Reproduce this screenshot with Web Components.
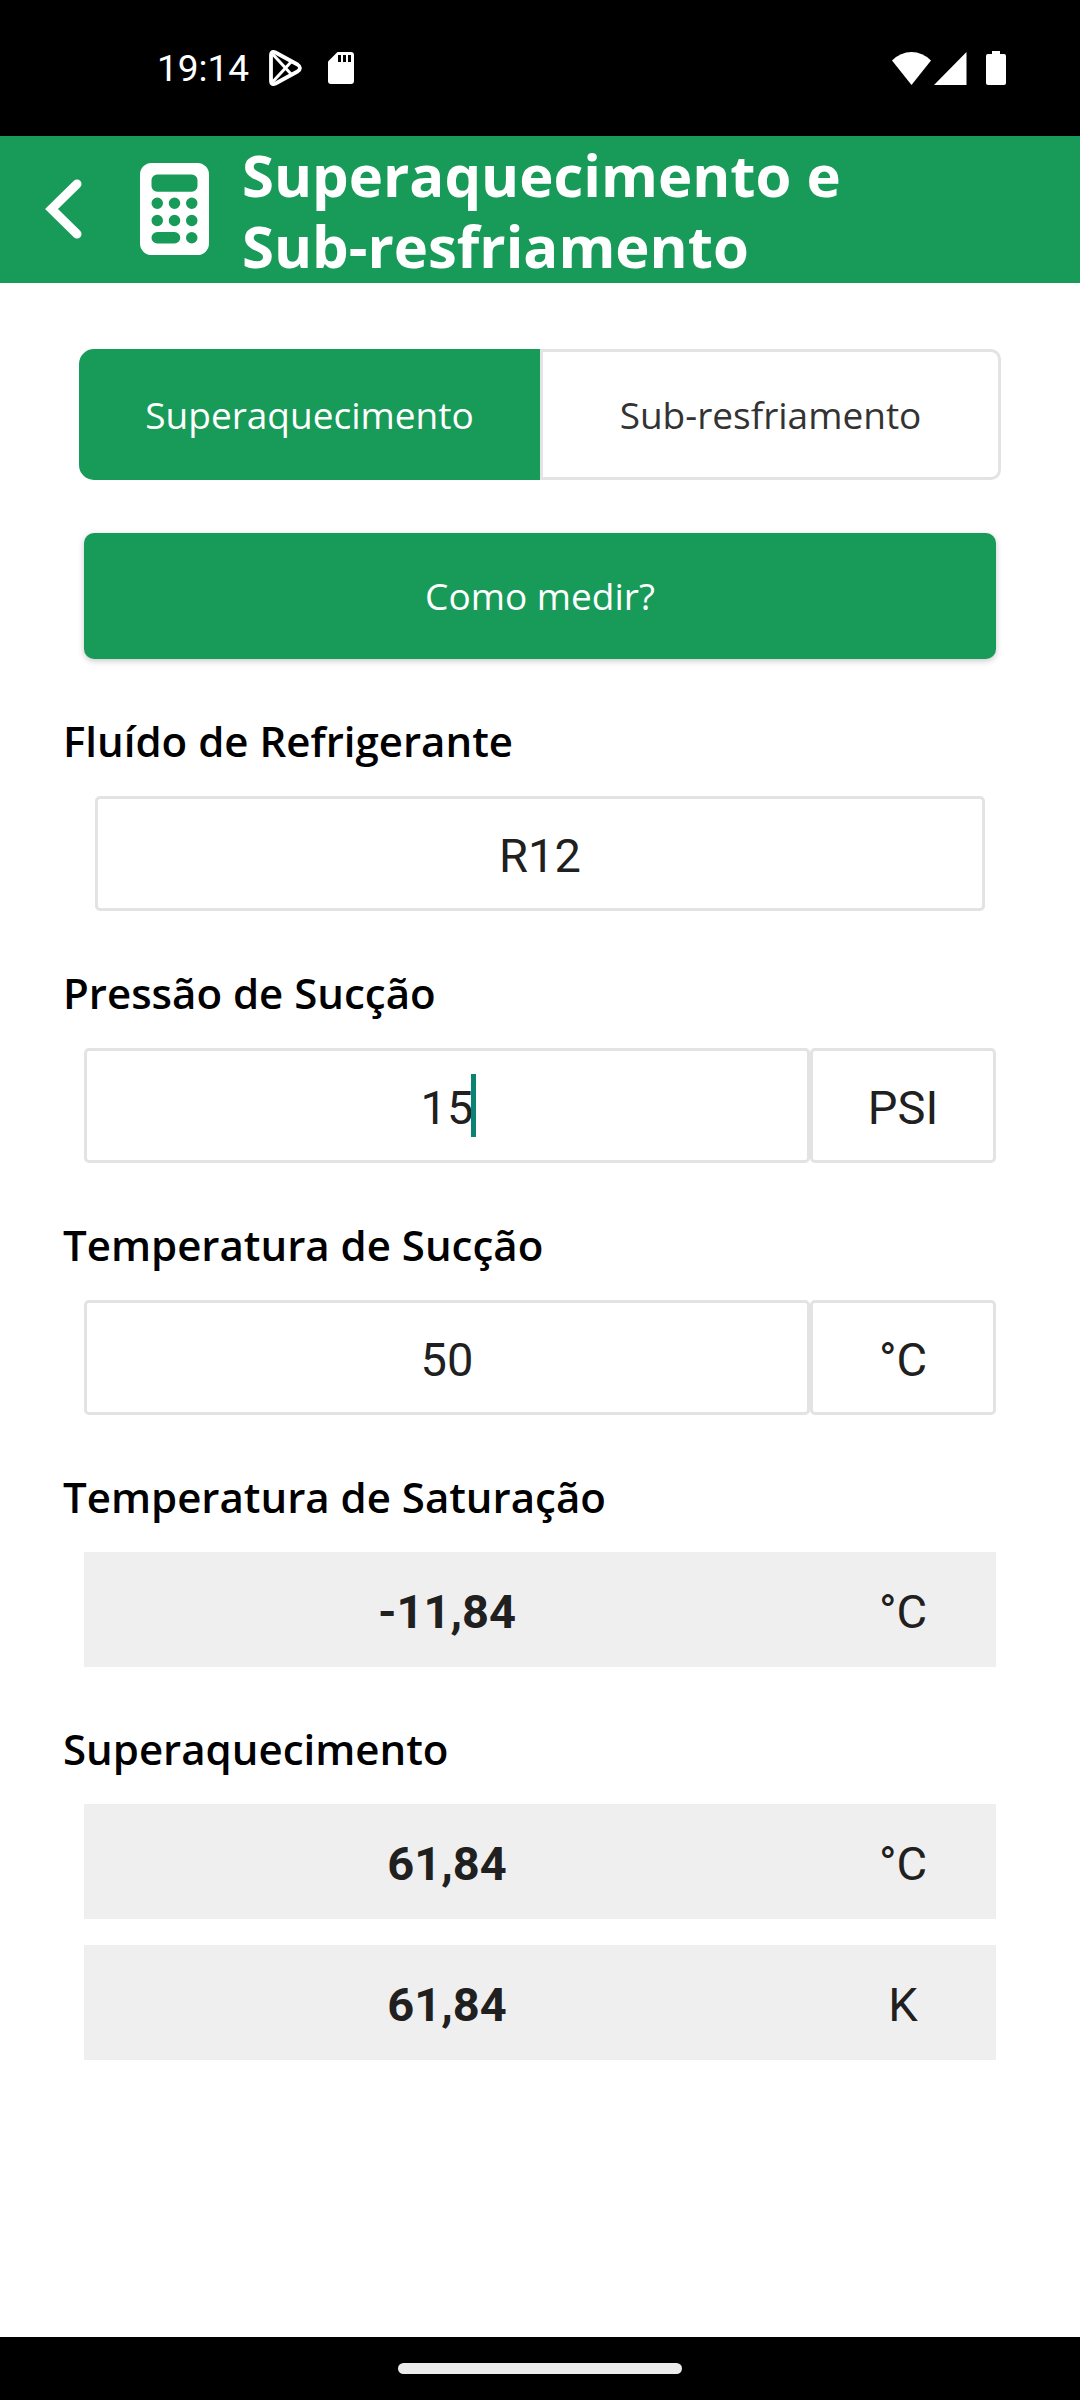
<!DOCTYPE html>
<html lang="pt-BR">
<head>
<meta charset="utf-8">
<meta name="viewport" content="width=device-width, initial-scale=1">
<title>Superaquecimento e Sub-resfriamento</title>
<style>
  :root {
    --green: #189b59;
    --line: #e3e3e3;
    --ink: #202020;
    --ui: "Open Sans", sans-serif;
    --num: Roboto, sans-serif;
  }
  body { margin: 0; background: #fff; font-family: var(--ui); }
</style>
</head>
<body>
<calc-app></calc-app>

<script>
const define = (name, html, setup) => {
  const tpl = document.createElement('template');
  tpl.innerHTML = html;
  customElements.define(name, class extends HTMLElement {
    constructor() {
      super();
      this.attachShadow({ mode: 'open' }).append(tpl.content.cloneNode(true));
    }
    connectedCallback() {
      if (setup) setup(this, this.shadowRoot);
    }
  });
};

define('status-bar', `
  <style>
    :host { display: flex; justify-content: space-between; align-items: center; box-sizing: border-box;
      height: 136px; padding: 0 74px 0 157px; background: #000; color: #fff; font: 37px/44px var(--num); }
    div { display: flex; align-items: center; }
    time { padding-top: 2px; }
    svg { display: block; }
    .left svg:first-of-type { margin-left: 20px; }
    .left svg + svg { margin-left: 26px; }
    .right svg:nth-child(2) { margin-left: 3px; }
    .right svg:nth-child(3) { margin-left: 19px; }
  </style>
  <div class="left">
    <time>19:14</time>
    <svg width="33" height="36" viewBox="0 0 33 36" fill="none" stroke="#fff" stroke-width="3.800" stroke-linejoin="round" aria-hidden="true">
      <path d="M2 5Q2 .5 6.500 2.500L28.500 14.500Q33.500 18 28.500 21.500L6.500 33.500Q2 35.500 2 31Z"/>
      <path d="M3.500 4L22.500 24.500M3.500 32L22.500 11.500" stroke-width="3"/>
    </svg>
    <svg width="26" height="32" viewBox="0 0 26 32" aria-hidden="true">
      <path fill="#fff" d="M9.500 0H23a3 3 0 0 1 3 3V29a3 3 0 0 1-3 3H3a3 3 0 0 1-3-3V9.500Z"/>
      <path fill="#000" d="M10 3h3v7h-3zM15 3h3v7h-3zM20 3h3v7h-3z"/>
    </svg>
  </div>
  <div class="right">
    <svg width="39" height="33" viewBox="0 0 39 33" aria-hidden="true"><path fill="#fff" d="M0 8.500Q8.500 0 19.500 0T39 8.500L19.500 33Z"/></svg>
    <svg width="33" height="33" viewBox="0 0 33 33" aria-hidden="true"><path fill="#fff" d="M32.500 0V33H0Z"/></svg>
    <svg width="20" height="34" viewBox="0 0 20 34" aria-hidden="true"><path fill="#fff" d="M6 0h8v3h4a2 2 0 0 1 2 2V32a2 2 0 0 1-2 2H2a2 2 0 0 1-2-2V5a2 2 0 0 1 2-2h4Z"/></svg>
  </div>
`);

define('app-header', `
  <style>
    :host { display: flex; align-items: center; box-sizing: border-box; min-height: 147px; padding: 0 45px 2px;
      background: var(--green); color: #fff; }
    button { flex: none; border: 0; padding: 0; margin: 0 58px 0 0; background: none; color: inherit; }
    svg { display: block; flex: none; }
    h1 { margin: 0 0 0 33px; max-width: 720px; padding-top: 3px; font: 700 58px/71px var(--ui); }
  </style>
  <button type="button" aria-label="Voltar">
    <svg width="37" height="60" viewBox="0 0 37 60" fill="none" stroke="#fff" stroke-width="9" stroke-linecap="round"><path d="M32 5L6.500 30L32 55"/></svg>
  </button>
  <svg width="69" height="92" viewBox="0 0 384 512" aria-hidden="true">
    <path fill="#fff" fill-rule="evenodd" d="M64 0H320a64 64 0 0 1 64 64V448a64 64 0 0 1-64 64H64a64 64 0 0 1-64-64V64A64 64 0 0 1 64 0Z
      M96 64a32 32 0 0 0-32 32v32a32 32 0 0 0 32 32H288a32 32 0 0 0 32-32V96a32 32 0 0 0-32-32Z
      M64 224a32 32 0 1 0 64 0a32 32 0 1 0-64 0ZM160 224a32 32 0 1 0 64 0a32 32 0 1 0-64 0ZM256 224a32 32 0 1 0 64 0a32 32 0 1 0-64 0Z
      M64 320a32 32 0 1 0 64 0a32 32 0 1 0-64 0ZM160 320a32 32 0 1 0 64 0a32 32 0 1 0-64 0ZM256 320a32 32 0 1 0 64 0a32 32 0 1 0-64 0Z
      M96 384a32 32 0 0 0 0 64H192a32 32 0 0 0 0-64ZM256 416a32 32 0 1 0 64 0a32 32 0 1 0-64 0Z"/>
  </svg>
  <h1><slot></slot></h1>
`);

define('mode-tabs', `
  <style>
    :host { display: block; padding: 0 79px; }
    div { display: flex; }
    button { flex: 1; box-sizing: border-box; height: 131px; border: 3px solid var(--line); padding: 0;
      background: #fff; color: #333; font: 37px/50px var(--ui); }
    button:first-child { border-radius: 15px 0 0 15px; }
    button:last-child { border-radius: 0 10px 10px 0; }
    button[aria-selected="true"] { border-color: var(--green); background: var(--green); color: #fff; }
  </style>
  <div role="tablist">
    <button type="button" role="tab" aria-selected="true">Superaquecimento</button>
    <button type="button" role="tab" aria-selected="false">Sub-resfriamento</button>
  </div>
`, (host, root) => {
  const tabs = [...root.querySelectorAll('button')];
  tabs.forEach(tab => tab.onclick = () =>
    tabs.forEach(t => t.setAttribute('aria-selected', String(t === tab))));
});

define('help-button', `
  <style>
    :host { display: block; padding: 0 84px; }
    button { display: block; width: 100%; height: 126px; border: 0; border-radius: 10px; padding: 0;
      background: var(--green); color: #fff; font: 37px/50px var(--ui); box-shadow: 0 2px 6px rgba(0, 0, 0, .22); }
  </style>
  <button type="button"><slot></slot></button>
`);

/* One captioned group; its controls are built from the attributes:
   kind = picker | entry | result, rows = "value|unit;value|unit". */
define('form-field', `
  <style>
    :host { display: block; }
    .caption { display: block; margin: 0 63px 27px; color: #000; font: 600 42px/57px var(--ui); }
    .rows { display: grid; gap: 26px; padding: 0 84px; }
    :host([kind="picker"]) .rows { padding: 0 95px; }
    .row { display: flex; }
    .box { position: relative; display: flex; flex: 1; min-width: 0; }
    .box.unit { flex: 0 0 186px; }
    input, select, output { appearance: none; box-sizing: border-box; width: 100%; height: 115px; margin: 0;
      border: 3px solid var(--line); border-radius: 5px; padding: 4px 0 0; outline: 0; background: #fff; color: var(--ink);
      font: 47px/56px var(--num); text-align: center; text-align-last: center; opacity: 1; }
    output { display: flex; align-items: center; justify-content: center; border-color: transparent; background: none; }
    :host([kind="result"]) .row { background: #efefef; }
    :host([kind="result"]) .box:first-child output { font-weight: 700; }
    .caret { position: absolute; top: 26px; left: calc(50% + var(--digits) * 1ch / 2 - 2px); width: 5px; height: 63px;
      background: #0b8372; font: 47px/56px var(--num); }
  </style>
  <label class="caption" for="c0"></label>
  <div class="rows"></div>
`, (host, root) => {
  const kind = host.getAttribute('kind');
  const name = host.getAttribute('name');
  const caption = root.querySelector('.caption');
  const rows = root.querySelector('.rows');
  caption.textContent = name;
  rows.textContent = '';

  const control = (tag, text, unit) => {
    const box = document.createElement('div');
    box.className = unit ? 'box unit' : 'box';
    const el = document.createElement(tag);
    if (tag === 'input') {
      el.type = 'text';
      el.inputMode = 'decimal';
      el.value = text;
    } else if (tag === 'select') {
      el.add(new Option(text));
    } else {
      el.textContent = text;
    }
    if (unit) el.setAttribute('aria-label', 'Unidade de ' + name);
    box.append(el);
    return box;
  };

  host.getAttribute('rows').split(';').forEach((pair, i) => {
    const [value, unit] = pair.split('|');
    const row = document.createElement('div');
    row.className = 'row';
    const main = control({ picker: 'select', entry: 'input', result: 'output' }[kind], value, false);
    if (i === 0) main.firstChild.id = 'c0';
    else main.firstChild.setAttribute('aria-label', name);
    if (host.hasAttribute('active')) {
      const caret = document.createElement('span');
      caret.className = 'caret';
      caret.style.setProperty('--digits', value.length);
      main.append(caret);
    }
    row.append(main);
    if (unit) row.append(control(kind === 'result' ? 'output' : 'select', unit, true));
    rows.append(row);
  });
});

define('nav-bar', `
  <style>
    :host { display: flex; align-items: center; justify-content: center; height: 63px; background: #000; }
    span { width: 284px; height: 11px; border-radius: 6px; background: #ebebeb; }
  </style>
  <span></span>
`);

define('calc-app', `
  <style>
    :host { display: flex; flex-direction: column; min-height: 100vh; }
    main { display: flex; flex: 1; flex-direction: column; gap: 53px; padding: 66px 0; }
  </style>
  <status-bar></status-bar>
  <app-header>Superaquecimento e<br>Sub-resfriamento</app-header>
  <main>
    <mode-tabs></mode-tabs>
    <help-button>Como medir?</help-button>
    <form-field kind="picker" name="Fluído de Refrigerante" rows="R12"></form-field>
    <form-field kind="entry" name="Pressão de Sucção" rows="15|PSI" active></form-field>
    <form-field kind="entry" name="Temperatura de Sucção" rows="50|°C"></form-field>
    <form-field kind="result" name="Temperatura de Saturação" rows="-11,84|°C"></form-field>
    <form-field kind="result" name="Superaquecimento" rows="61,84|°C;61,84|K"></form-field>
  </main>
  <nav-bar></nav-bar>
`);
</script>
</body>
</html>
